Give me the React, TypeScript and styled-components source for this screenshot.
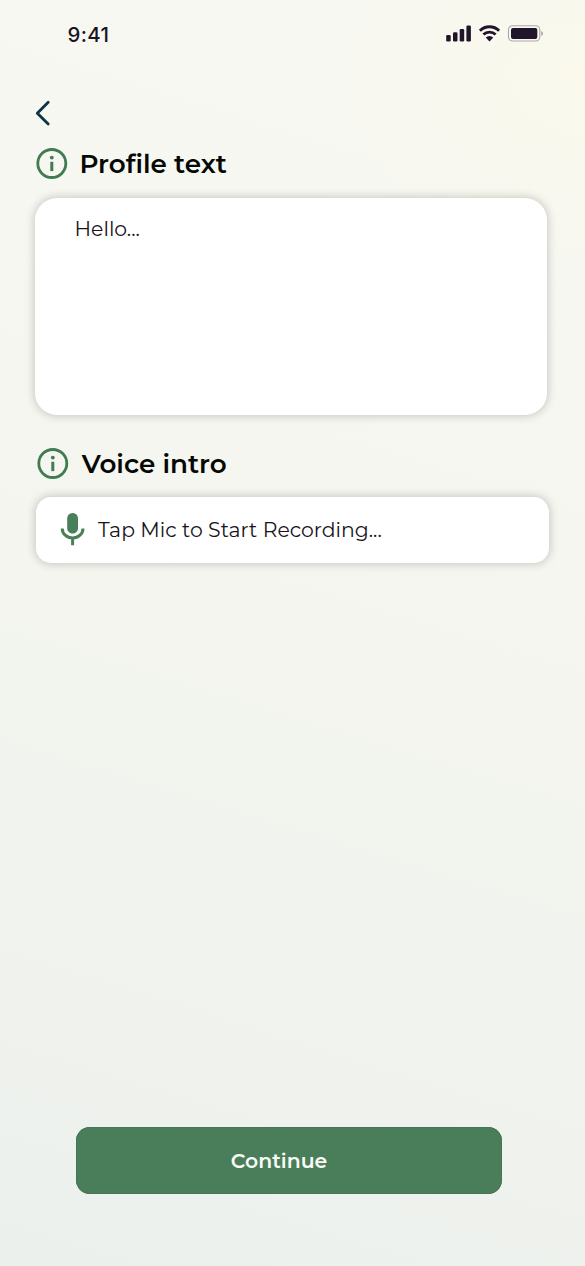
import React from "react";
import styled, { createGlobalStyle } from "styled-components";

const GlobalStyle = createGlobalStyle`
  * { box-sizing: border-box; }
  body {
    margin: 0;
    font-family: Montserrat, Inter, "Liberation Sans", sans-serif;
    color: #1a1422;
  }
`;

const Screen = styled.main`
  display: flex;
  flex-direction: column;
  width: 585px;
  height: 1266px;
  overflow: hidden;
  background:
    radial-gradient(ellipse 260px 200px at 100% 6%, rgba(251, 249, 233, 0.7), rgba(251, 249, 233, 0) 100%),
    linear-gradient(197deg, #f8f8f2 0%, #f6f7f1 30%, #f3f5ee 52%, #f0f3ee 75%, #ecf0ec 100%);
`;

const StatusBar = styled.header`
  display: flex;
  justify-content: space-between;
  height: 70px;
  padding: 0 41px 0 67.5px;
`;

const Clock = styled.time`
  line-height: 70px;
  font-family: Inter, "Liberation Sans", sans-serif;
  font-size: 20.4px;
  font-weight: 500;
  letter-spacing: 0.4px;
`;

const StatusIcons = styled.svg`
  width: 98px;
  height: 18px;
  margin-top: 24px;
`;

const BackButton = styled.button`
  display: block;
  width: 20px;
  height: 28px;
  margin: 29px 0 0 33px;
  padding: 0;
  border: 0;
  background: none;

  svg { display: block; }
`;

const SectionHeader = styled.div<{ $top: number; $left: number; $gap: number }>`
  display: flex;
  align-items: center;
  gap: ${(p) => p.$gap}px;
  height: 32px;
  margin: ${(p) => p.$top}px 0 0 ${(p) => p.$left}px;
`;

const SectionTitle = styled.h2`
  margin: 0;
  font-size: 26.2px;
  line-height: 32px;
  font-weight: 600;
  color: #060806;
  white-space: nowrap;
`;

const Card = styled.div`
  background: #fff;
  box-shadow: 0 0 9px 1px rgba(70, 75, 65, 0.27);
`;

const TextCard = styled(Card)`
  width: 512px;
  height: 217px;
  margin: 18px 0 0 35px;
  padding: 16px 39.5px;
  border-radius: 22px;
`;

const RecordCard = styled(Card)`
  display: flex;
  align-items: center;
  gap: 13px;
  width: 512.5px;
  height: 66px;
  margin: 17.5px 0 0 36.3px;
  padding-left: 23.7px;
  border-radius: 15px;
`;

const BodyText = styled.span`
  display: block;
  font-size: 20.4px;
  line-height: 30px;
  font-weight: 400;
  white-space: nowrap;
`;

const ContinueButton = styled.button`
  width: 426px;
  height: 67.5px;
  margin: auto 0 71.7px 76px;
  padding: 0 20px 0 0;
  border: 0;
  border-radius: 14px;
  background: #4a7d59;
  box-shadow: inset 0 0 0 0.8px #457553;
  color: #f7fbf5;
  font-family: inherit;
  font-size: 20.4px;
  font-weight: 600;
`;

const InfoIcon = () => (
  <svg width="32" height="32" viewBox="0 0 32 32">
    <circle cx="15.8" cy="15.5" r="14" fill="none" stroke="#417b52" strokeWidth="2.8" />
    <circle cx="15.8" cy="9.6" r="1.9" fill="#417b52" />
    <rect x="14.3" y="13.8" width="3" height="9.3" fill="#417b52" />
  </svg>
);

const MicIcon = () => (
  <svg width="25" height="34" viewBox="0 0 25 34">
    <rect x="7.2" y="0" width="10.8" height="20.6" rx="5.2" fill="#4a8059" />
    <path d="M2.2 15.4a10.4 9.6 0 0 0 20.8 0M12.6 25v7.3" fill="none" stroke="#4a8059" strokeWidth="3" />
  </svg>
);

export default function App() {
  return (
    <>
      <GlobalStyle />
      <Screen>
        <StatusBar>
          <Clock>9:41</Clock>
          <StatusIcons viewBox="0 0 98 18" fill="#20152a">
            <rect x="0.2" y="11" width="4.5" height="6.5" rx="1.3" />
            <rect x="7" y="8.3" width="4.5" height="9.2" rx="1.3" />
            <rect x="13.7" y="5" width="4.5" height="12.5" rx="1.3" />
            <rect x="20.4" y="1.4" width="4.5" height="16.1" rx="1.3" />
            <path d="M33.9 6.7a13.6 13.6 0 0 1 19.2 0M37.4 10.6a8.7 8.7 0 0 1 12.2 0" fill="none" stroke="#20152a" strokeWidth="2.8" />
            <path d="M39.7 13.6a5.4 5.4 0 0 1 7.6 0L43.5 17.4Z" />
            <rect x="62.5" y="1.8" width="31.3" height="15.2" rx="4" fill="none" stroke="#a9a8a7" strokeWidth="1.1" />
            <rect x="65" y="4" width="26.3" height="10.9" rx="2" />
            <path d="M95.2 7c2.4 1.2 2.4 3.8 0 5Z" fill="#a9a8a7" />
          </StatusIcons>
        </StatusBar>
        <BackButton aria-label="Back">
          <svg width="20" height="28" viewBox="0 0 20 28">
            <path d="M15.2 3.3 4.3 14.2l10.9 10.9" fill="none" stroke="#0d3446" strokeWidth="2.8" strokeLinecap="round" strokeLinejoin="round" />
          </svg>
        </BackButton>
        <SectionHeader $top={21} $left={35.7} $gap={11.8}>
          <InfoIcon />
          <SectionTitle>Profile text</SectionTitle>
        </SectionHeader>
        <TextCard>
          <BodyText>Hello...</BodyText>
        </TextCard>
        <SectionHeader $top={32.5} $left={37.2} $gap={12.6}>
          <InfoIcon />
          <SectionTitle>Voice intro</SectionTitle>
        </SectionHeader>
        <RecordCard>
          <MicIcon />
          <BodyText>Tap Mic to Start Recording...</BodyText>
        </RecordCard>
        <ContinueButton>Continue</ContinueButton>
      </Screen>
    </>
  );
}
